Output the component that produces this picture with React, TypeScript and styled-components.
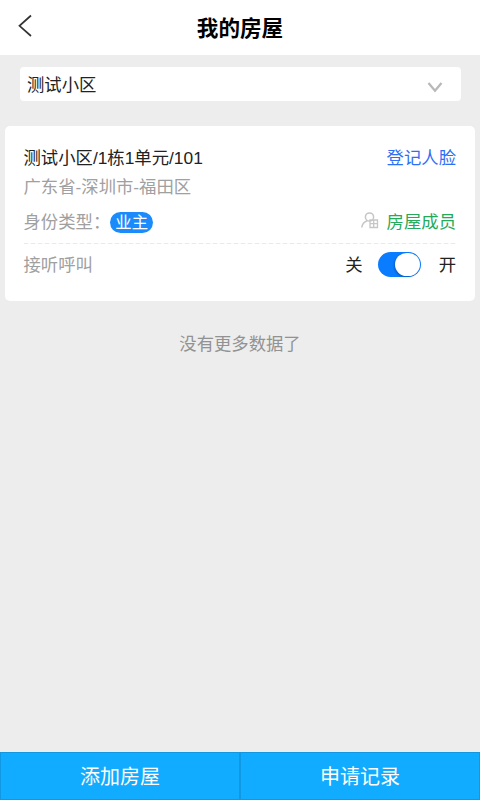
import React, { useState } from 'react';
import styled, { createGlobalStyle } from 'styled-components';

const GlobalStyle = createGlobalStyle`
  * { box-sizing: border-box; }
  body {
    margin: 0;
    background: #ededed;
    font-family: "Liberation Sans", "Noto Sans CJK SC", sans-serif;
    font-size: 17.35px;
    color: #222;
  }
  button { font: inherit; border: 0; padding: 0; background: none; cursor: pointer; }
`;

const Page = styled.div`
  width: 100%;
  height: 100vh;
  display: flex;
  flex-direction: column;
  overflow: hidden;
`;

const Header = styled.header`
  height: 55px;
  flex: none;
  display: grid;
  grid-template-columns: 48px 1fr 48px;
  align-items: center;
  background: #fff;
`;

const BackButton = styled.button`
  display: flex;
  padding: 0 0 4px 17px;
`;

const Title = styled.h1`
  margin: 0;
  padding-top: 2px;
  font-size: 21.6px;
  line-height: 53px;
  font-weight: 700;
  text-align: center;
  color: #000;
`;

const Select = styled.div`
  flex: none;
  display: flex;
  align-items: center;
  justify-content: space-between;
  height: 34px;
  margin: 12px 19px 25px 20px;
  padding: 2px 18px 0 7px;
  border-radius: 4px;
  background: #fff;
  svg { margin-top: 4px; }
`;

const Card = styled.section`
  flex: none;
  height: 175px;
  margin: 0 5px;
  padding: 17px 19px 0 18.5px;
  border-radius: 5px;
  background: #fff;
`;

const Row = styled.div<{ $height: number }>`
  display: flex;
  align-items: center;
  justify-content: space-between;
  height: ${(p) => p.$height}px;
  white-space: nowrap;
`;

const Divider = styled.div`
  height: 1px;
  background: repeating-linear-gradient(90deg, #e9e9e9 0 4px, #fafafa 4px 7px);
`;

const Group = styled.div`
  display: flex;
  align-items: center;
`;

const Label = styled.span<{ $color?: string }>`
  line-height: 26px;
  color: ${(p) => p.$color ?? '#222'};
`;

const Tag = styled.span`
  width: 43px;
  height: 21px;
  border-radius: 11px;
  background: #1b8bfb;
  color: #fff;
  font-size: 16.4px;
  line-height: 20px;
  text-align: center;
`;

const MemberLink = styled(Group)`
  gap: 8px;
  svg { margin-top: -3px; }
`;

const Toggle = styled.button<{ $on: boolean }>`
  display: flex;
  justify-content: ${(p) => (p.$on ? 'flex-end' : 'flex-start')};
  width: 43px;
  height: 25px;
  margin: 0 18px 0 15px;
  padding: 1px;
  border-radius: 13px;
  background: ${(p) => (p.$on ? '#0a7cff' : '#ccc')};
`;

const Knob = styled.span`
  width: 25px;
  height: 23px;
  border-radius: 12px;
  background: #fff;
  box-shadow: -1px 1px 2px rgba(0, 0, 0, 0.25);
`;

const EndNote = styled.p`
  flex: 1;
  margin: 30px 0 0;
  line-height: 26px;
  text-align: center;
  color: #929292;
`;

const Footer = styled.footer`
  flex: none;
  display: grid;
  grid-template-columns: 1fr 1fr;
  height: 48px;
`;

const FooterButton = styled.button`
  && {
    padding-top: 2px;
    border: 1px solid #1298e2;
    background: #11acff;
    color: #fff;
    font-size: 20px;
    line-height: 44px;
  }
`;

const MemberIcon = () => (
  <svg width="18" height="17" viewBox="0 0 18 17" fill="none" stroke="#c6c6c6" strokeWidth="1.5">
    <circle cx="8.5" cy="5" r="4.1" />
    <path d="M.8 15.5C1.2 12 3.4 9.8 6.2 8.8" />
    <path d="M9 8h7.5v7.5H9zM9 11.7h7.5M12.7 8v7.5" strokeWidth="1.3" />
  </svg>
);

export default function App() {
  const [answering, setAnswering] = useState(true);
  return (
    <>
      <GlobalStyle />
      <Page>
        <Header>
          <BackButton aria-label="返回">
            <svg width="16" height="24" viewBox="0 0 16 24" fill="none" stroke="#333" strokeWidth="1.7">
              <path d="M14 1.5L2.5 11.8L14 22" />
            </svg>
          </BackButton>
          <Title>我的房屋</Title>
        </Header>
        <Select>
          <Label>测试小区</Label>
          <svg width="16" height="11" viewBox="0 0 16 11" fill="none" stroke="#b9b9b9" strokeWidth="2.3">
            <path d="M1.5 1L8 8.8L14.5 1" />
          </svg>
        </Select>
        <Card>
          <Row $height={29}>
            <Label>测试小区/1栋1单元/101</Label>
            <Label $color="#2d70f5">登记人脸</Label>
          </Row>
          <Row $height={29}>
            <Label $color="#a0a0a0">广东省-深圳市-福田区</Label>
          </Row>
          <Row $height={42}>
            <Group>
              <Label $color="#a0a0a0">身份类型：</Label>
              <Tag>业主</Tag>
            </Group>
            <MemberLink>
              <MemberIcon />
              <Label $color="#26a95b">房屋成员</Label>
            </MemberLink>
          </Row>
          <Divider />
          <Row $height={41}>
            <Label $color="#a0a0a0">接听呼叫</Label>
            <Group>
              <Label>关</Label>
              <Toggle
                role="switch"
                aria-label="接听呼叫"
                aria-checked={answering}
                $on={answering}
                onClick={() => setAnswering(!answering)}
              >
                <Knob />
              </Toggle>
              <Label>开</Label>
            </Group>
          </Row>
        </Card>
        <EndNote>没有更多数据了</EndNote>
        <Footer>
          <FooterButton>添加房屋</FooterButton>
          <FooterButton>申请记录</FooterButton>
        </Footer>
      </Page>
    </>
  );
}
